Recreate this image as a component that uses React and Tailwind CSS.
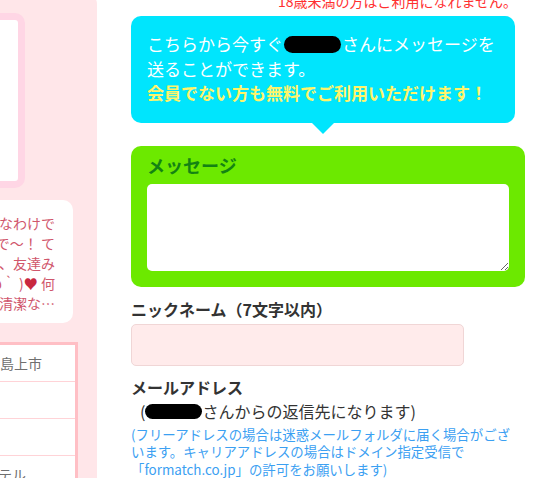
const Blob = ({ className = "" }) => (
  <span className={"inline-block bg-black rounded-[9px] align-middle " + className}></span>
);

const SideBar = () => {
  const lines = ["、なわけで", "ったで〜！ て", "、友達み", "HEART", "清潔な…"];
  const rows = ["新潟県島上市", "", "", "ラブホテル"];

  return (
    <aside className="w-[97px] shrink-0 -mt-[6px] h-[490px] bg-[#ffe6e9] rounded-tr-[10px] overflow-hidden flex flex-col items-end">
      {/* profile photo frame */}
      <div className="mt-[19px] mr-[72px] w-[200px] h-[175px] shrink-0 bg-white border-[7px] border-[#ffd6e5] rounded-[10px]"></div>

      {/* comment card */}
      <div className="mt-[12px] mr-[24px] w-[200px] h-[123px] shrink-0 bg-white rounded-[10px] pt-[13px] pr-[18px] text-[14px] leading-[20px] text-[#d0566c]">
        {lines.map((line, i) => (
          <div key={i} className="text-right whitespace-nowrap">
            {line === "HEART" ? (
              <>
                (´ω｀ )<span className="text-[#c8283f]">♥</span> 何
              </>
            ) : (
              line
            )}
          </div>
        ))}
      </div>

      {/* profile table */}
      <div className="mt-[19px] mr-[19px] w-[200px] shrink-0 border-t-[3px] border-r-[3px] border-[#ffbfc5] bg-white">
        {rows.map((row, i) => (
          <div
            key={i}
            className={
              "h-[37px] flex items-center justify-end text-[14px] text-[#6f6f6f] whitespace-nowrap border-[#ffd3d7] " +
              (i < rows.length - 1 ? "border-b " : "") +
              (i === 0 ? "pr-[33px]" : "pr-[49px]")
            }
          >
            {row}
          </div>
        ))}
      </div>
    </aside>
  );
};

const MessageForm = () => {
  return (
    <main className="ml-[34px] w-[394px] shrink-0 flex flex-col">
      <p className="-mt-[9px] pr-[8px] text-right text-[14px] leading-[20px] text-[#ff3030]">
        18歳未満の方はご利用になれません。
      </p>

      {/* speech bubble */}
      <div className="relative mt-[5px] w-[384px] h-[109px] bg-[#00e5fd] rounded-[10px] px-[16px] pt-[16px] text-[17px] leading-[24.5px]">
        <p className="text-white whitespace-nowrap">
          こちらから今すぐ<Blob className="w-[57px] h-[17px] mx-[1px] -mt-[3px]" />さんにメッセージを
          <br />
          送ることができます。
        </p>
        <p className="font-bold text-[#fff46a] whitespace-nowrap">会員でない方も無料でご利用いただけます！</p>
        <span className="absolute left-[181px] -bottom-[11px] w-0 h-0 border-l-[11px] border-r-[11px] border-t-[11px] border-l-transparent border-r-transparent border-t-[#00e5fd]"></span>
      </div>

      {/* message box */}
      <div className="mt-[23px] w-[394px] bg-[#6ce900] rounded-[10px] px-[16px] pt-[7px] pb-[16px]">
        <label className="block font-bold text-[18px] leading-[24px] text-[#138313]">メッセージ</label>
        <textarea className="mt-[7px] block w-[362px] h-[87px] bg-white rounded-[5px] border-0 outline-none p-[6px] text-[14px]"></textarea>
      </div>

      <label className="mt-[10px] font-bold text-[16px] leading-[24px] text-[#333]">ニックネーム（7文字以内）</label>
      <input
        type="text"
        className="mt-[3px] w-[333px] h-[43px] bg-[#ffebeb] border border-[#f0d6d6] rounded-[5px] outline-none px-[8px]"
      />

      <label className="mt-[9px] font-bold text-[16px] leading-[24px] text-[#333]">メールアドレス</label>
      <p className="pl-[9px] text-[16px] leading-[24px] text-[#333] whitespace-nowrap">
        (<Blob className="w-[57px] h-[15px] -mt-[3px]" />さんからの返信先になります)
      </p>
      <p className="mt-[3px] text-[13.4px] leading-[17.5px] text-[#3ba0f2] whitespace-nowrap">
        (フリーアドレスの場合は迷惑メールフォルダに届く場合がござ
        <br />
        います。キャリアアドレスの場合はドメイン指定受信で
        <br />
        「formatch.co.jp」の許可をお願いします)
      </p>
    </main>
  );
};

export default function App() {
  return (
    <div className="w-[540px] h-[478px] overflow-hidden bg-white flex font-['Noto_Sans_CJK_JP','Noto_Sans',sans-serif]">
      <SideBar />
      <MessageForm />
    </div>
  );
}
